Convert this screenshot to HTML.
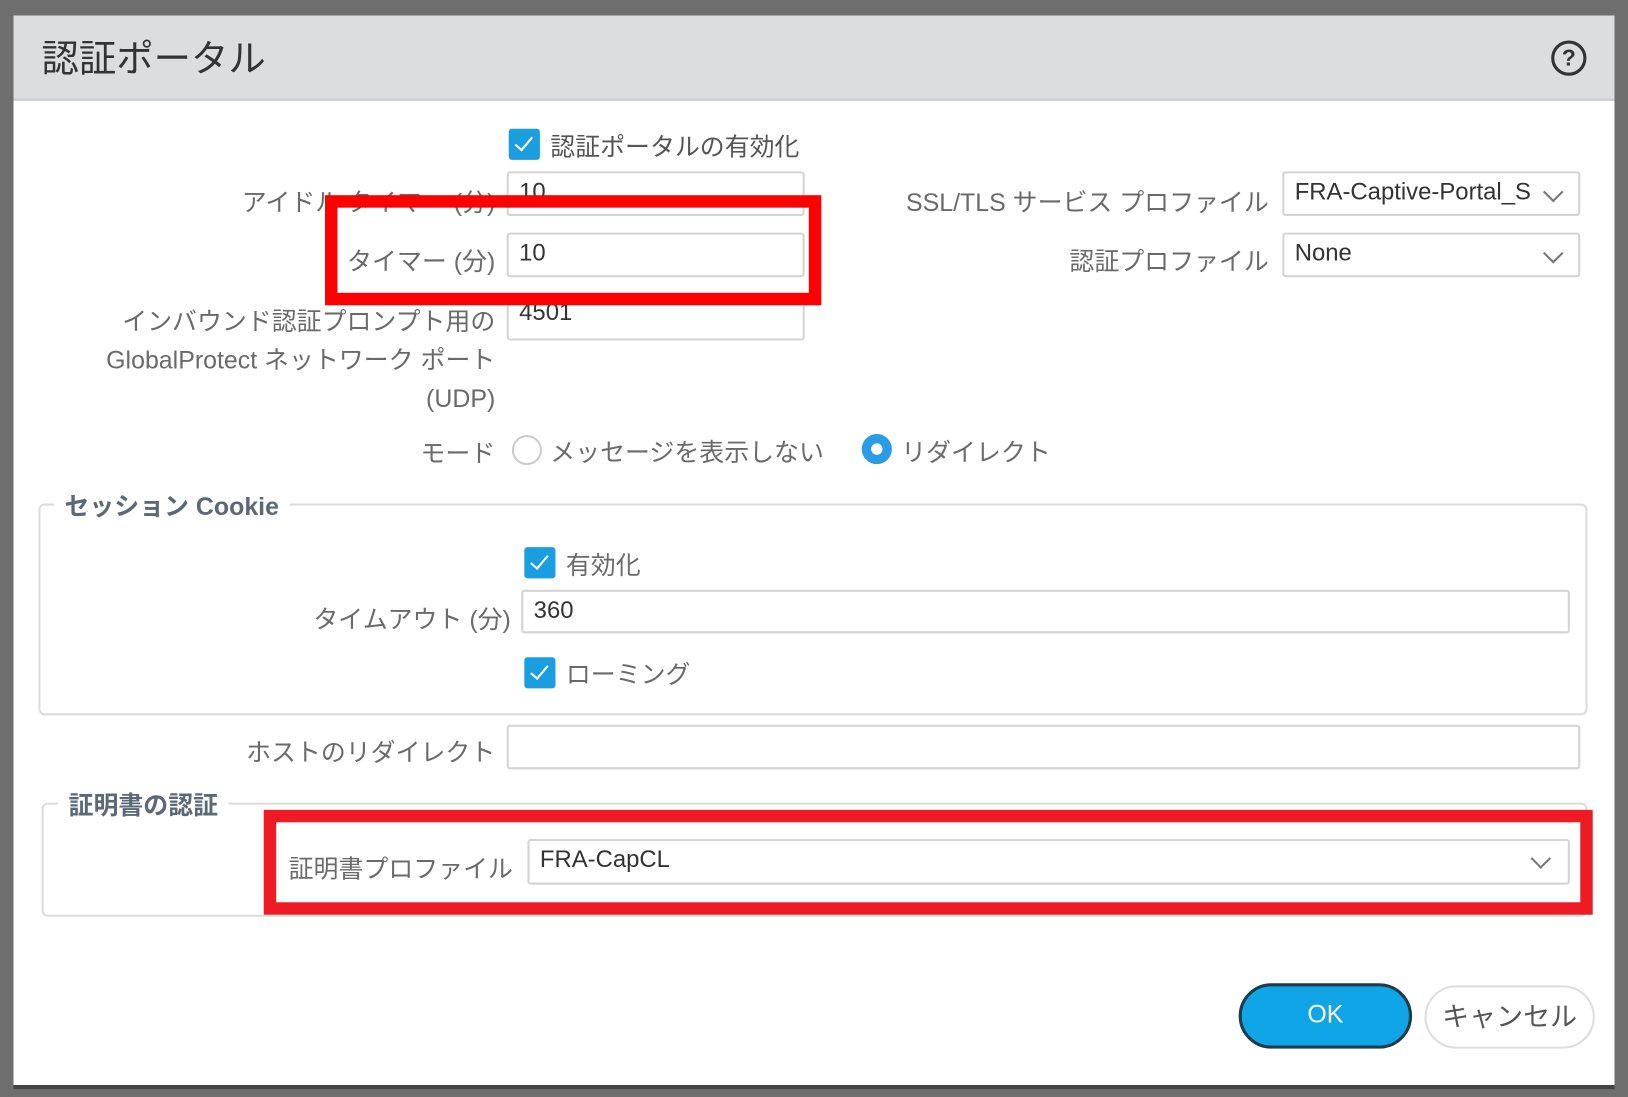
<!DOCTYPE html>
<html><head><meta charset="utf-8"><style>
html,body{margin:0;padding:0;width:1628px;height:1097px;overflow:hidden;background:#555;}
#w{position:absolute;left:0;top:0;width:1568px;height:1057px;transform:scale(1.03827);transform-origin:0 0;background:#6e6e6e;font-family:"Liberation Sans","Noto Sans CJK JP",sans-serif;}
.a{position:absolute;}
.dlg{left:13px;top:15px;width:1542px;height:1030px;background:#fff;box-shadow:0 4px 0 #444;}
.tb{left:13px;top:15px;width:1542px;height:80px;background:#dcdddf;border-bottom:2px solid #c8c9cb;}
.lbl{position:absolute;color:#6a6a6a;font-size:24px;white-space:nowrap;text-align:right;}
.inp{position:absolute;border:2px solid #d4d4d4;border-radius:3px;background:#fff;box-sizing:border-box;font-size:23px;color:#333;padding:4px 0 0 10px;}
.cb{position:absolute;width:30px;height:30px;background:#1a9ee0;border-radius:3px;}
.cb:after{content:"";position:absolute;left:10px;top:4px;width:7px;height:15px;border:solid #fff;border-width:0 2px 2px 0;transform:rotate(40deg);}
.chev{position:absolute;width:12px;height:12px;border:solid #777;border-width:0 2px 2px 0;transform:rotate(45deg);}
.fs{position:absolute;border:2px solid #dcdcdc;border-radius:6px;}
.lg{position:absolute;background:#fff;color:#5a6878;font-weight:bold;font-size:24px;padding:0 10px;}
.red{position:absolute;box-sizing:border-box;}
</style></head><body><div id="w">
<div class="a dlg"></div>
<div class="a tb"></div>
<div class="a" style="left:40px;top:28px;font-size:36px;color:#333;">認証ポータル</div>
<div class="a" style="left:1494px;top:39px;width:28px;height:28px;border:3px solid #333;border-radius:50%;text-align:center;font-size:22px;line-height:28px;font-weight:bold;color:#333;">?</div>

<div class="cb" style="left:490px;top:124px;"></div>
<div class="lbl" style="left:530px;top:122px;color:#555;">認証ポータルの有効化</div>

<div class="lbl" style="right:1091px;top:175px;">アイドル タイマー (分)</div>
<div class="inp" style="left:488px;top:165px;width:287px;height:43px;">10</div>
<div class="lbl" style="right:1091px;top:232px;">タイマー (分)</div>
<div class="inp" style="left:488px;top:224px;width:287px;height:43px;">10</div>
<div class="lbl" style="right:1091px;top:292px;line-height:37px;">インバウンド認証プロンプト用の<br>GlobalProtect ネットワーク ポート<br>(UDP)</div>
<div class="inp" style="left:488px;top:285px;width:287px;height:43px;padding-top:0;">4501</div>

<div class="lbl" style="right:346px;top:175px;">SSL/TLS サービス プロファイル</div>
<div class="inp" style="left:1235px;top:165px;width:287px;height:43px;overflow:hidden;white-space:nowrap;"><span style="display:inline-block;width:228px;overflow:hidden;">FRA-Captive-Portal_SSL</span></div>
<div class="chev" style="left:1489px;top:178px;"></div>
<div class="lbl" style="right:346px;top:232px;">認証プロファイル</div>
<div class="inp" style="left:1235px;top:224px;width:287px;height:43px;">None</div>
<div class="chev" style="left:1489px;top:237px;"></div>

<div class="lbl" style="right:1091px;top:417px;">モード</div>
<div class="a" style="left:493px;top:419px;width:25px;height:25px;border:2px solid #ccc;border-radius:50%;"></div>
<div class="lbl" style="left:530px;top:416px;">メッセージを表示しない</div>
<div class="a" style="left:830px;top:418px;width:29px;height:29px;background:#2a9be6;border-radius:50%;"></div>
<div class="a" style="left:839px;top:427px;width:11px;height:11px;background:#fff;border-radius:50%;"></div>
<div class="lbl" style="left:868px;top:416px;">リダイレクト</div>

<div class="fs" style="left:37px;top:485px;width:1488px;height:200px;"></div>
<div class="lg" style="left:52px;top:468px;">セッション Cookie</div>
<div class="cb" style="left:505px;top:527px;"></div>
<div class="lbl" style="left:545px;top:525px;">有効化</div>
<div class="lbl" style="right:1076px;top:577px;">タイムアウト (分)</div>
<div class="inp" style="left:502px;top:568px;width:1010px;height:42px;">360</div>
<div class="cb" style="left:505px;top:633px;"></div>
<div class="lbl" style="left:545px;top:630px;">ローミング</div>

<div class="lbl" style="right:1091px;top:705px;">ホストのリダイレクト</div>
<div class="inp" style="left:488px;top:698px;width:1034px;height:43px;"></div>

<div class="fs" style="left:40px;top:773px;width:1485px;height:106px;"></div>
<div class="lg" style="left:56px;top:756px;">証明書の認証</div>
<div class="lbl" style="left:278px;top:817px;">証明書プロファイル</div>
<div class="inp" style="left:508px;top:808px;width:1004px;height:44px;">FRA-CapCL</div>
<div class="chev" style="left:1477px;top:820px;"></div>

<div class="red" style="left:313px;top:188px;width:478px;height:106px;border:12px solid #ff0000;"></div>
<div class="red" style="left:254px;top:780px;width:1280px;height:101px;border:12px solid #ed1c24;"></div>

<div class="a" style="left:1193px;top:947px;width:167px;height:63px;box-sizing:border-box;background:#0fa5e6;border:3px solid #1c3c4e;border-radius:32px;color:#fff;font-size:24px;text-align:center;line-height:56px;">OK</div>
<div class="a" style="left:1372px;top:949px;width:164px;height:61px;box-sizing:border-box;background:#fff;border:2px solid #ddd;border-radius:31px;color:#555;font-size:26px;text-align:center;line-height:56px;">キャンセル</div>
</div></body></html>
